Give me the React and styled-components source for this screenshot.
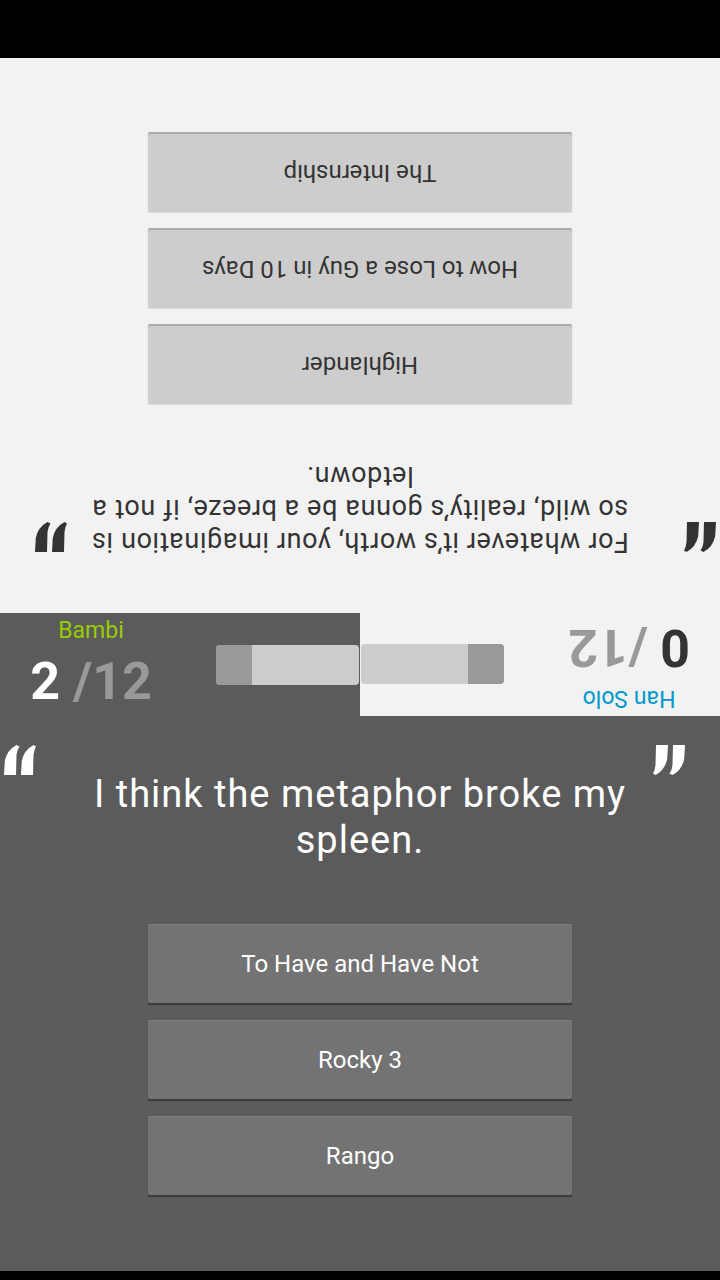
import styled, { createGlobalStyle } from "styled-components";

const GlobalStyle = createGlobalStyle`
  html, body {
    margin: 0;
    padding: 0;
    background: #000;
  }
  body {
    font-family: Roboto, "Noto Sans", sans-serif;
  }
`;

const top = {
  name: "Han Solo",
  score: 0,
  quote: "For whatever it’s worth, your imagination is so wild, reality’s gonna be a breeze, if not a letdown.",
  answers: ["Highlander", "How to Lose a Guy in 10 Days", "The Internship"],
};

const bottom = {
  name: "Bambi",
  score: 2,
  quote: "I think the metaphor broke my spleen.",
  answers: ["To Have and Have Not", "Rocky 3", "Rango"],
};

// the big quote marks (drawn, as in the app)
const QuoteMark = ({ color, closing }) => (
  <MarkSvg width="32" height="30" viewBox="0 0 32 30" $closing={closing}>
    <path d="M0 30 L12 30 L12.5 10 Q13 5 15.5 1.5 L12.5 0 Q3 5 0.8 16 Z" fill={color} />
    <path d="M17 30 L29 30 L29.5 10 Q30 5 32 1.5 L29.5 0 Q20 5 17.8 16 Z" fill={color} />
  </MarkSvg>
);

const Panel = ({ player, dark }) => (
  <PanelBox $dark={dark}>
    <QuoteArea>
      <MarkLeft $offset={dark ? 0 : 32}>
        <QuoteMark color={dark ? "#fff" : "#333"} />
      </MarkLeft>
      <QuoteText $dark={dark}>{player.quote}</QuoteText>
      <MarkRight $offset={dark ? 0 : 32}>
        <QuoteMark color={dark ? "#fff" : "#333"} closing />
      </MarkRight>
    </QuoteArea>
    <AnswerList>
      {player.answers.map((a) => (
        <Answer key={a} $dark={dark}>
          {a}
        </Answer>
      ))}
    </AnswerList>
  </PanelBox>
);

const ScoreHalf = ({ player, dark }) => (
  <Half $dark={dark}>
    <ScoreBox>
      <PlayerName $dark={dark}>{player.name}</PlayerName>
      <Score>
        <Points $dark={dark}>{player.score}</Points> <Total>/12</Total>
      </Score>
    </ScoreBox>
    <Progress>
      <ProgressFill />
    </Progress>
  </Half>
);

export default function App() {
  return (
    <Screen>
      <GlobalStyle />
      <StatusBar />
      <Panel player={top} />
      <ScoreBar>
        <ScoreHalf player={bottom} dark />
        <ScoreHalf player={top} />
      </ScoreBar>
      <Panel player={bottom} dark />
      <NavBar />
    </Screen>
  );
}

const Screen = styled.div`
  width: 720px;
  height: 1280px;
  display: flex;
  flex-direction: column;
  background: #000;
  overflow: hidden;
`;

const StatusBar = styled.div`
  height: 58px;
  flex-shrink: 0;
  background: #000;
`;

const NavBar = styled.div`
  height: 10px;
  flex-shrink: 0;
  background: #000;
`;

// one player's half of the table, the top one is turned round
const PanelBox = styled.div`
  height: 555px;
  flex-shrink: 0;
  display: flex;
  flex-direction: column;
  background: ${(p) => (p.$dark ? "#5b5b5b" : "#f2f2f2")};
  transform: ${(p) => (p.$dark ? "none" : "rotate(180deg)")};
`;

const QuoteArea = styled.div`
  height: 208px;
  box-sizing: border-box;
  padding-top: 29px;
  display: grid;
  grid-template-columns: 80px 1fr 80px;
  align-items: start;
`;

const MarkLeft = styled.div`
  justify-self: start;
  margin-left: 4px;
  margin-top: ${(p) => p.$offset}px;
`;

const MarkRight = styled.div`
  justify-self: end;
  margin-right: 35px;
  margin-top: ${(p) => p.$offset}px;
`;

const MarkSvg = styled.svg`
  display: block;
  transform: ${(p) => (p.$closing ? "rotate(180deg)" : "none")};
`;

const QuoteText = styled.p`
  margin: 26px -4px 0;
  text-align: center;
  font-size: ${(p) => (p.$dark ? "38px" : "27px")};
  letter-spacing: ${(p) => (p.$dark ? "1px" : "0.6px")};
  line-height: ${(p) => (p.$dark ? "46px" : "33px")};
  color: ${(p) => (p.$dark ? "#fff" : "#333")};
`;

const AnswerList = styled.div`
  display: flex;
  flex-direction: column;
  align-items: center;
  gap: 17px;
`;

const Answer = styled.button`
  width: 424px;
  height: 79px;
  border: none;
  border-radius: 2px;
  font-family: Roboto, "Noto Sans", sans-serif;
  font-size: 24px;
  color: ${(p) => (p.$dark ? "#fff" : "#333")};
  background: ${(p) => (p.$dark ? "#737373" : "#cdcdcd")};
  box-shadow: ${(p) =>
    p.$dark
      ? "inset 0 1px 0 #808080, 0 2px 1px rgba(0, 0, 0, 0.35)"
      : "inset 0 1px 0 #d8d8d8, 0 2px 1px rgba(0, 0, 0, 0.3)"};
`;

// middle strip with both scores
const ScoreBar = styled.div`
  height: 103px;
  flex-shrink: 0;
  display: flex;
`;

const Half = styled.div`
  width: 360px;
  box-sizing: border-box;
  padding-right: 1px;
  display: flex;
  align-items: flex-start;
  background: ${(p) => (p.$dark ? "#5b5b5b" : "#f2f2f2")};
  transform: ${(p) => (p.$dark ? "none" : "rotate(180deg)")};
`;

const ScoreBox = styled.div`
  width: 182px;
  display: flex;
  flex-direction: column;
  align-items: center;
`;

const PlayerName = styled.div`
  margin-top: 5px;
  font-size: 23px;
  line-height: 26px;
  color: ${(p) => (p.$dark ? "#99cc00" : "#0099cc")};
`;

const Score = styled.div`
  margin-top: 12px;
  font-size: 52px;
  line-height: 52px;
  font-weight: 700;
  white-space: pre;
`;

const Points = styled.span`
  color: ${(p) => (p.$dark ? "#fff" : "#333")};
`;

const Total = styled.span`
  color: #999;
`;

const Progress = styled.div`
  width: 143px;
  height: 40px;
  margin-left: auto;
  align-self: center;
  border-radius: 4px;
  overflow: hidden;
  background: #cccccc;
  display: flex;
`;

const ProgressFill = styled.div`
  width: 36px;
  background: #999;
`;
